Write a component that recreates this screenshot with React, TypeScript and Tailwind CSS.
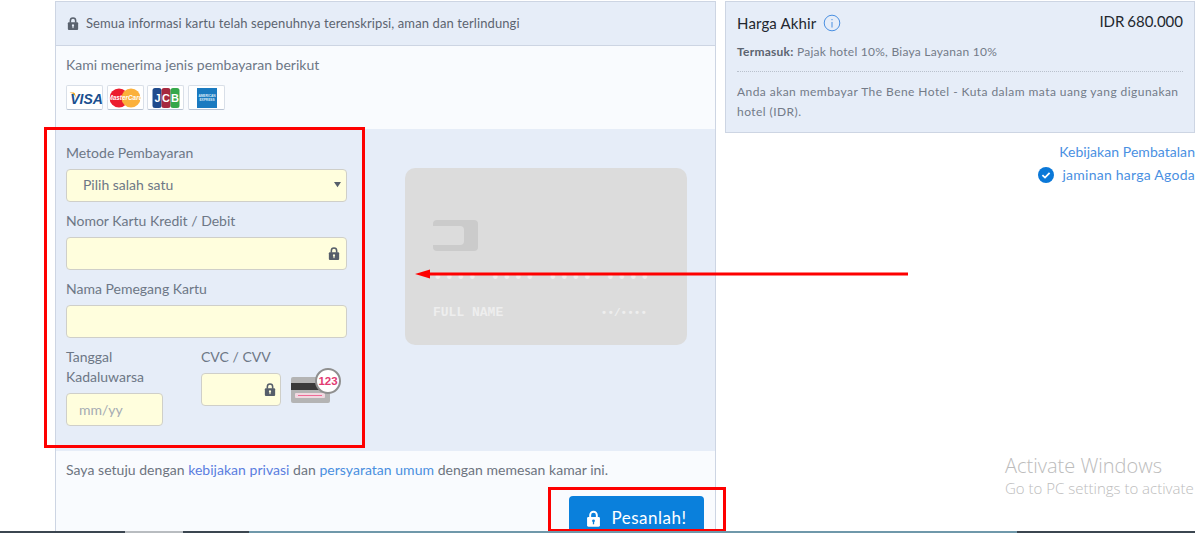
// Agoda style payment step: card form on the left, price summary on the right.
import React from 'react';

const FONT = 'font-["Lato","Open_Sans",sans-serif]';

function LockIcon({ className, hole = '#fff' }: { className?: string; hole?: string }) {
  return (
    <svg viewBox="0 0 14 16" className={className} fill="currentColor">
      <path d="M3 7V4.8a4 4 0 0 1 8 0V7H9.2V4.8a2.2 2.2 0 0 0-4.4 0V7z" />
      <rect x="1" y="6.6" width="12" height="9" rx="1.2" />
      <circle cx="7" cy="10.2" r="1.3" fill={hole} />
      <rect x="6.4" y="10.4" width="1.2" height="3" fill={hole} />
    </svg>
  );
}

function PayTile({ children }: { children: React.ReactNode }) {
  return (
    <div className="flex h-[25px] w-[37px] items-center justify-center rounded-[2px] border border-[#d9dfe8] border-b-[#b9c3d3] bg-white">
      {children}
    </div>
  );
}

function PaymentLogos() {
  return (
    <div className="mt-[10px] flex gap-[3.7px]">
      <PayTile>
        <svg viewBox="0 0 36 24" className="h-6 w-9 flex-none">
          <path d="M1 6.5 C5 6.5 8 8.5 9.5 13 L8 8 C7.8 7 7 6.5 6 6.5z" fill="#f4a51c" />
          <text x="19.5" y="17.5" textAnchor="middle" fontFamily="Liberation Sans" fontStyle="italic" fontWeight="700" fontSize="14" fill="#1a4f8f">VISA</text>
        </svg>
      </PayTile>
      <PayTile>
        <svg viewBox="0 0 36 24" className="h-6 w-9 flex-none">
          <circle cx="12" cy="12" r="9.5" fill="#ec1c2e" />
          <circle cx="24" cy="12" r="9.5" fill="#fbb03b" />
          <text x="18" y="14" textAnchor="middle" fontFamily="Liberation Sans" fontStyle="italic" fontWeight="700" fontSize="6.4" fill="#fff">MasterCard</text>
        </svg>
      </PayTile>
      <PayTile>
        <svg viewBox="0 0 36 24" className="h-6 w-9 flex-none">
          <rect x="4.5" y="2" width="9" height="20" rx="2.5" fill="#1f4a8c" />
          <rect x="13.5" y="2" width="9" height="20" rx="2.5" fill="#a6293f" />
          <rect x="22.5" y="2" width="9" height="20" rx="2.5" fill="#35a84a" />
          <g fontFamily="Liberation Sans" fontWeight="700" fontSize="11" fill="#fff" textAnchor="middle">
            <text x="9.5" y="16">J</text>
            <text x="18" y="16">C</text>
            <text x="27" y="16">B</text>
          </g>
        </svg>
      </PayTile>
      <PayTile>
        <svg viewBox="0 0 36 24" className="h-6 w-9 flex-none">
          <rect x="8" y="2" width="20" height="20" fill="#1a7ac0" />
          <g fontFamily="Liberation Sans" fontWeight="700" fontSize="3.2" fill="#dcecf8" textAnchor="middle">
            <text x="18" y="11">AMERICAN</text>
            <text x="18" y="15">EXPRESS</text>
          </g>
        </svg>
      </PayTile>
    </div>
  );
}

function Field({ label, children }: { label: React.ReactNode; children: React.ReactNode }) {
  return (
    <div className="flex flex-col">
      <label className="mb-[6px] text-[14px] leading-[20px] text-[#6d7786]">{label}</label>
      {children}
    </div>
  );
}

function TextBox({ lock, placeholder, className }: { lock?: string; placeholder?: string; className?: string }) {
  return (
    <div className={`relative h-[33px] ${className ?? 'w-full'}`}>
      <input
        placeholder={placeholder}
        className="h-full w-full rounded-[4px] border border-[#cfcfc9] bg-[#fffedd] px-3 text-[14px] outline-none placeholder:text-[#a5abb3]"
      />
      {lock && <LockIcon hole="#fffedd" className={`absolute top-[9px] h-[15px] w-[12px] text-[#565e6a] ${lock}`} />}
    </div>
  );
}

function CvcBadge() {
  return (
    <svg viewBox="0 0 52 36" className="mt-[-5px] ml-[10px] h-[36px] w-[52px]">
      <rect x="0" y="9" width="39" height="26" rx="2" fill="#b4b4b4" />
      <rect x="0" y="15" width="39" height="7" fill="#3a3a3a" />
      <rect x="4" y="25" width="30" height="5" rx="1" fill="#f0d8e0" />
      <rect x="7" y="27" width="24" height="1" fill="#ee6a96" />
      <circle cx="37" cy="13" r="12" fill="#fff" stroke="#8f8f8f" strokeWidth="2" />
      <text x="37" y="17" textAnchor="middle" fontFamily="Liberation Sans" fontWeight="700" fontSize="11.5" fill="#e23a72">123</text>
    </svg>
  );
}

function CardPreview() {
  return (
    <div className="mt-[25px] ml-[58px] flex h-[177px] w-[282px] flex-col self-start rounded-[10px] bg-[#dcdcdc] pr-[40px] pl-[28px] font-['Liberation_Mono',monospace] text-[#eeeeee]">
      <div className="mt-[52px] flex h-[31px] w-[45px] items-center rounded-[4px] bg-[#cbcbcb]">
        <div className="h-[19px] w-[31px] rounded-r-[4px] bg-[#dcdcdc]" />
      </div>
      <div className="mt-[17px] text-[16px] leading-[20px] font-bold tracking-[1.9px] whitespace-nowrap">•••• •••• •••• ••••</div>
      <div className="mt-[15px] flex items-center justify-between text-[13px] leading-[20px] font-bold">
        <span>FULL NAME</span>
        <span className="text-[11px]">••/••••</span>
      </div>
    </div>
  );
}

function PaymentPanel() {
  return (
    <div className="flex h-[532px] w-[661px] flex-none flex-col border-x border-t border-[#cdd5e3] bg-[#f9fbfe]">
      <div className="flex h-[44px] flex-none items-center gap-[7px] border-b border-[#cdd5e3] bg-[#e6edf8] pl-[11px] text-[13px] tracking-[0.1px] text-[#5c6470]">
        <LockIcon hole="#e6edf8" className="h-[15px] w-[12px] text-[#5a626e]" />
        Semua informasi kartu telah sepenuhnya terenskripsi, aman dan terlindungi
      </div>
      <div className="h-[83px] flex-none px-[10px] pt-[9px]">
        <div className="text-[14px] leading-[20px] text-[#6d7786]">Kami menerima jenis pembayaran berikut</div>
        <PaymentLogos />
      </div>
      <div className="flex h-[322px] flex-none bg-[#e6edf8] px-[10px] pt-[14px]">
        <div className="flex w-[281px] flex-none flex-col gap-[9px]">
          <Field label="Metode Pembayaran">
            <div className="flex h-[33px] items-center justify-between rounded-[4px] border border-[#cfcfc9] bg-[#fffedd] pr-[5px] pb-[2px] pl-[16px] text-[14px] text-[#6d7786]">
              Pilih salah satu
              <svg viewBox="0 0 8 8" className="h-[7px] w-[7px] text-[#565e6a]" fill="currentColor">
                <path d="M0 1h8L4 7z" />
              </svg>
            </div>
          </Field>
          <Field label="Nomor Kartu Kredit / Debit">
            <TextBox lock="right-[7px]" />
          </Field>
          <Field label="Nama Pemegang Kartu">
            <TextBox />
          </Field>
          <div className="flex">
            <div className="w-[135px] flex-none">
              <Field label={<>Tanggal<br />Kadaluwarsa</>}>
                <TextBox placeholder="mm/yy" className="w-[97px]" />
              </Field>
            </div>
            <Field label="CVC / CVV">
              <div className="flex">
                <TextBox lock="right-[5px]" className="w-[80px]" />
                <CvcBadge />
              </div>
            </Field>
          </div>
        </div>
        <CardPreview />
      </div>
      <div className="px-[10px] pt-[9px] text-[14px] leading-[20px] tracking-[0.03px] text-[#6d7480]">
        Saya setuju dengan <a className="text-[#5b7ee0]">kebijakan privasi</a> dan <a className="text-[#4a8fe0]">persyaratan umum</a> dengan memesan kamar ini.
      </div>
      <div className="mt-[16px] flex justify-end pr-[11px]">
        <button
          type="button"
          className="flex h-[48px] w-[135px] items-start justify-center gap-[10px] rounded-[4px] bg-[#0a80dc] pt-[12px] text-[17px] leading-[20px] tracking-[0.5px] text-white"
        >
          <LockIcon hole="#0a80dc" className="mt-[1px] h-[19px] w-[15px] text-white" />
          Pesanlah!
        </button>
      </div>
    </div>
  );
}

function SummaryPanel() {
  return (
    <div className="ml-[9px] flex w-[470px] flex-none flex-col">
      <div className="h-[132px] border border-[#cdd5e3] bg-[#e6edf8] pt-[11px] pr-[11px] pl-[11px]">
        <div className="flex items-start justify-between">
          <div className="flex items-center gap-[7px] text-[15px] leading-[20px] tracking-[0.15px] text-[#22272e]">
            Harga Akhir
            <svg viewBox="0 0 18 18" className="h-[18px] w-[18px]" fill="none" stroke="#4a90e2">
              <circle cx="9" cy="9" r="7.8" />
              <path d="M9 8v5.5M9 5v1.2" />
            </svg>
          </div>
          <div className="text-[15px] leading-[16px] [word-spacing:-1px] text-[#22272e]">IDR 680.000</div>
        </div>
        <div className="mt-[10px] text-[12px] leading-[18px] tracking-[0.25px] text-[#737b88]">
          <b className="font-bold text-[#5c6470]">Termasuk:</b> Pajak hotel 10%, Biaya Layanan 10%
        </div>
        <div className="mt-[10px] border-t border-dotted border-[#b9c1cd]" />
        <div className="mt-[10px] text-[12px] leading-[20px] tracking-[0.44px] text-[#737b88]">
          Anda akan membayar The Bene Hotel - Kuta dalam mata uang yang digunakan hotel (IDR).
        </div>
      </div>
      <div className="mt-[9px] flex flex-col items-end text-[14px] leading-[20px] text-[#4a90e2]">
        <a className="tracking-[0.05px]">Kebijakan Pembatalan</a>
        <a className="mt-[3px] flex items-center gap-[8px] tracking-[0.25px]">
          <svg viewBox="0 0 16 16" className="h-4 w-4">
            <circle cx="8" cy="8" r="8" fill="#0a78d8" />
            <path d="M4.4 8.2 7 10.6 11.6 5.8" fill="none" stroke="#fff" strokeWidth="1.8" />
          </svg>
          jaminan harga Agoda
        </a>
      </div>
    </div>
  );
}

function Annotations() {
  return (
    <>
      <div className="absolute top-[127px] left-[44px] h-[321px] w-[321px] border-[3px] border-[#fe0000]" />
      <div className="absolute top-[487px] left-[548px] h-[45px] w-[178px] border-[3px] border-[#fe0000]" />
      <svg className="absolute top-[266px] left-[414px] h-[16px] w-[496px]" viewBox="0 0 496 16">
        <path d="M494 8H14" stroke="#fe0000" strokeWidth="3" />
        <path d="M1 8 16 3.5v9z" fill="#fe0000" />
      </svg>
    </>
  );
}

function ActivateWindows() {
  return (
    <div className="absolute top-[452px] left-[1005px] font-['Open_Sans',sans-serif] font-light whitespace-nowrap text-[#bcbcbc]">
      <div className="text-[20px] leading-[27px]">Activate Windows</div>
      <div className="text-[15px] leading-[18px]">Go to PC settings to activate</div>
    </div>
  );
}

function Taskbar() {
  return (
    <div className="absolute right-0 bottom-0 left-0 flex h-[2px]">
      <div className="w-[125px] bg-[#3b4650]" />
      <div className="w-[58px] bg-[#b8bcc0]" />
      <div className="w-[66px] bg-[#3b4650]" />
      <div className="flex-1 bg-[#6f98aa]" />
      <div className="w-[178px] bg-[#3b4650]" />
    </div>
  );
}

export default function App() {
  return (
    <div className={`relative h-[533px] w-full overflow-hidden bg-white pt-px ${FONT}`}>
      <div className="flex pl-[55px]">
        <PaymentPanel />
        <SummaryPanel />
      </div>
      <Annotations />
      <ActivateWindows />
      <Taskbar />
    </div>
  );
}
